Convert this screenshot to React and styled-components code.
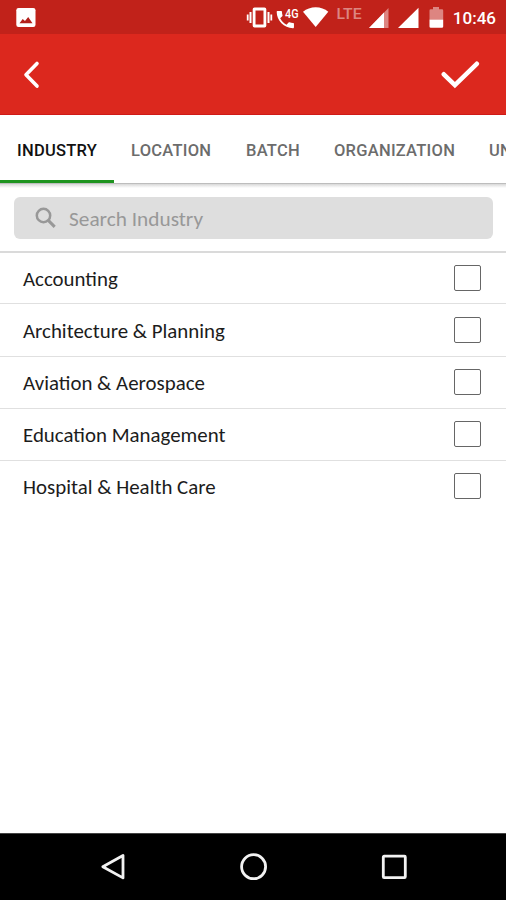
import styled, { createGlobalStyle } from "styled-components";
import { useState } from "react";

const tabs = [
  { name: "INDUSTRY", width: 114 },
  { name: "LOCATION", width: 115 },
  { name: "BATCH", width: 88 },
  { name: "ORGANIZATION", width: 155 },
  { name: "UNIVERSITY", width: 130 },
];

const industries = [
  "Accounting",
  "Architecture & Planning",
  "Aviation & Aerospace",
  "Education Management",
  "Hospital & Health Care",
];

const StatusIcons = () => (
  <svg width="200" height="34" viewBox="246 0 200 34" fill="#fff">
    {/* vibrate */}
    <path
      fillRule="evenodd"
      d="M254.5 7.5h10a1.8 1.8 0 0 1 1.8 1.8v16.4a1.8 1.8 0 0 1-1.8 1.8h-10a1.8 1.8 0 0 1-1.8-1.8V9.3a1.8 1.8 0 0 1 1.8-1.8zM255.5 10.5v14h8v-14z"
    />
    <path d="M249.5 12h2v11h-2zM246.8 14.5h1.8v6h-1.8zM267.5 12h2v11h-2zM270.4 14.5h1.8v6h-1.8z" />
    {/* call */}
    <path
      transform="translate(273.8 8) scale(.96)"
      d="M6.62 10.79c1.44 2.83 3.76 5.14 6.59 6.59l2.2-2.2c.27-.27.67-.36 1.02-.24 1.12.37 2.33.57 3.57.57.55 0 1 .45 1 1V20c0 .55-.45 1-1 1-9.39 0-17-7.61-17-17 0-.55.45-1 1-1h3.5c.55 0 1 .45 1 1 0 1.25.2 2.45.57 3.57.11.35.03.74-.25 1.02l-2.2 2.2z"
    />
    <text x="285" y="18" fontSize="13" fontWeight="500" textLength="13.5" lengthAdjust="spacingAndGlyphs">
      4G
    </text>
    {/* wifi */}
    <path d="M303 11.8C306.5 9 311 7.3 315.7 7.3s9.2 1.7 12.6 4.5L315.7 27z" />
    <text x="336.5" y="18.6" fontSize="14.5" fontWeight="500" opacity=".45" textLength="25" lengthAdjust="spacingAndGlyphs">
      LTE
    </text>
    {/* signal bars */}
    <path opacity=".45" d="M369 28L388.5 8v20z" />
    <path d="M369 28L384 12.6V28z" />
    <path d="M398 28L418.5 7.8V28z" />
    {/* battery */}
    <path opacity=".45" d="M433 7h6v2.2h3a1.2 1.2 0 0 1 1.2 1.2V19.5h-13.7v-9.1a1.2 1.2 0 0 1 1.2-1.2H433z" />
    <path d="M429.5 19.5h13.7v7a1.3 1.3 0 0 1-1.3 1.3h-11.1a1.3 1.3 0 0 1-1.3-1.3z" />
  </svg>
);

const App = () => {
  const [activeTab, setActiveTab] = useState("INDUSTRY");
  const [search, setSearch] = useState("");
  const [selected, setSelected] = useState([]);

  const toggle = (name) => {
    setSelected(
      selected.includes(name)
        ? selected.filter((item) => item !== name)
        : [...selected, name]
    );
  };

  return (
    <Container>
      <GlobalStyle />
      <StatusBar>
        <svg width="20" height="20" viewBox="0 0 20 20">
          <rect x=".3" y="1" width="19.2" height="19" rx="2.2" fill="#fff" />
          <path d="M3.5 16.2l3.2-4.2 2.3 2 3.2-4 4.3 6.2z" fill="#b3201b" />
        </svg>
        <StatusRight>
          <StatusIcons />
          <Clock>10:46</Clock>
        </StatusRight>
      </StatusBar>
      <Header>
        <IconButton aria-label="Back">
          <svg width="18" height="30" viewBox="0 0 18 30" fill="none" stroke="#fff">
            <path d="M15 4.5L4 15.8l11 11.3" strokeWidth="3.6" strokeLinecap="round" strokeLinejoin="round" />
          </svg>
        </IconButton>
        <IconButton aria-label="Apply">
          <svg width="40" height="30" viewBox="0 0 40 30" fill="none" stroke="#fff">
            <path d="M3.8 15.3l11.1 10.8L36.8 4.8" strokeWidth="4.6" strokeLinecap="round" />
          </svg>
        </IconButton>
      </Header>
      <Tabs>
        {tabs.map((tab) => (
          <Tab
            key={tab.name}
            $width={tab.width}
            $active={tab.name === activeTab}
            onClick={() => setActiveTab(tab.name)}
          >
            {tab.name}
          </Tab>
        ))}
      </Tabs>
      <SearchArea>
        <SearchBox>
          <svg width="24" height="24" viewBox="0 0 24 24" fill="none" stroke="#989898">
            <circle cx="9.5" cy="9.5" r="6.7" strokeWidth="2.5" />
            <path d="M14.3 14.4l6.4 6.5" strokeWidth="3" />
          </svg>
          <SearchInput
            placeholder="Search Industry"
            value={search}
            onChange={(e) => setSearch(e.target.value)}
          />
        </SearchBox>
      </SearchArea>
      <List>
        {industries
          .filter((name) => name.toLowerCase().includes(search.toLowerCase()))
          .map((name) => (
            <Row key={name} onClick={() => toggle(name)}>
              <Label>{name}</Label>
              <Checkbox $checked={selected.includes(name)} />
            </Row>
          ))}
      </List>
      <NavBar>
        <svg width="26" height="30" viewBox="0 0 26 30">
          <path d="M23 3.5v22.4L2.8 14.7z" />
        </svg>
        <svg width="30" height="30" viewBox="0 0 30 30">
          <circle cx="14.6" cy="14.7" r="12" />
        </svg>
        <svg width="26" height="30" viewBox="0 0 26 30">
          <rect x="2.3" y="4.2" width="22" height="21.4" rx=".8" />
        </svg>
      </NavBar>
    </Container>
  );
};

const GlobalStyle = createGlobalStyle`
  body {
    margin: 0;
    background: #fff;
  }
  * {
    box-sizing: border-box;
  }
`;

const Container = styled.div`
  width: 506px;
  height: 900px;
  display: flex;
  flex-direction: column;
  overflow: hidden;
  background: #fff;
  font-family: Roboto, sans-serif;
`;

const StatusBar = styled.div`
  height: 34px;
  flex-shrink: 0;
  display: flex;
  align-items: center;
  justify-content: space-between;
  padding: 0 10px 0 16px;
  background: #c1221a;
`;

const StatusRight = styled.div`
  display: flex;
  align-items: center;
`;

const Clock = styled.span`
  width: 50px;
  color: #fff;
  font-size: 17px;
  font-weight: 500;
  text-align: right;
  line-height: 34px;
  padding-top: 2px;
`;

const Header = styled.header`
  height: 81px;
  flex-shrink: 0;
  display: flex;
  align-items: center;
  justify-content: space-between;
  padding: 0 26px 0 22px;
  background: #dc281e;
  border-bottom: 1px solid #cf1a17;
`;

const IconButton = styled.button`
  display: flex;
  padding: 0;
  border: none;
  background: none;
  cursor: pointer;
`;

const Tabs = styled.nav`
  height: 69px;
  flex-shrink: 0;
  display: flex;
  overflow: hidden;
  border-bottom: 1px solid #bdbdbd;
`;

const Tab = styled.button`
  width: ${(props) => props.$width}px;
  flex-shrink: 0;
  border: none;
  border-bottom: 3px solid ${(props) => (props.$active ? "#1e941f" : "transparent")};
  padding: 5px 0 0 17px;
  background: none;
  color: ${(props) => (props.$active ? "#111" : "#6c6c6c")};
  font-family: Roboto, sans-serif;
  font-size: 16.5px;
  font-weight: 500;
  letter-spacing: 0.25px;
  text-align: left;
  white-space: nowrap;
  cursor: pointer;
`;

const SearchArea = styled.div`
  height: 69px;
  flex-shrink: 0;
  padding: 13px 13px 0 14px;
  border-bottom: 2px solid #dadada;
  background: linear-gradient(#d8d8d8, #fff 4px);
`;

const SearchBox = styled.label`
  height: 42px;
  display: flex;
  align-items: center;
  gap: 11px;
  padding-left: 20px;
  border-radius: 6px;
  background: #dedede;
`;

const SearchInput = styled.input`
  flex: 1;
  padding: 1px 0 0;
  border: none;
  outline: none;
  background: none;
  color: #333;
  font-family: Carlito, Lato, sans-serif;
  font-size: 21.3px;
  &::placeholder {
    color: #989898;
  }
`;

const List = styled.div`
  flex: 1;
`;

const Row = styled.div`
  height: 52px;
  display: flex;
  align-items: center;
  justify-content: space-between;
  padding: 0 25px 0 23px;
  border-bottom: 1px solid #e0e0e0;
  cursor: pointer;
  &:first-child {
    height: 51px;
  }
  &:nth-child(2) {
    height: 53px;
  }
  &:last-child {
    border-bottom: none;
    padding-bottom: 1px;
  }
`;

const Label = styled.span`
  padding-top: 1px;
  color: #1c1c1c;
  font-family: Carlito, Lato, sans-serif;
  font-size: 20.9px;
  line-height: 26px;
`;

const Checkbox = styled.span`
  width: 27px;
  height: 26px;
  margin-bottom: 1px;
  border: 1.5px solid #666;
  border-radius: 2px;
  background: ${(props) => (props.$checked ? "#dc281e" : "#fff")};
`;

const NavBar = styled.footer`
  height: 67px;
  flex-shrink: 0;
  display: flex;
  align-items: center;
  justify-content: space-between;
  padding: 0 99px 1px 100px;
  background: #000;
  border-top: 1px solid #444;
  svg {
    fill: none;
    stroke: #f2f2f2;
    stroke-width: 2.8;
    stroke-linejoin: round;
  }
`;

export default App;
